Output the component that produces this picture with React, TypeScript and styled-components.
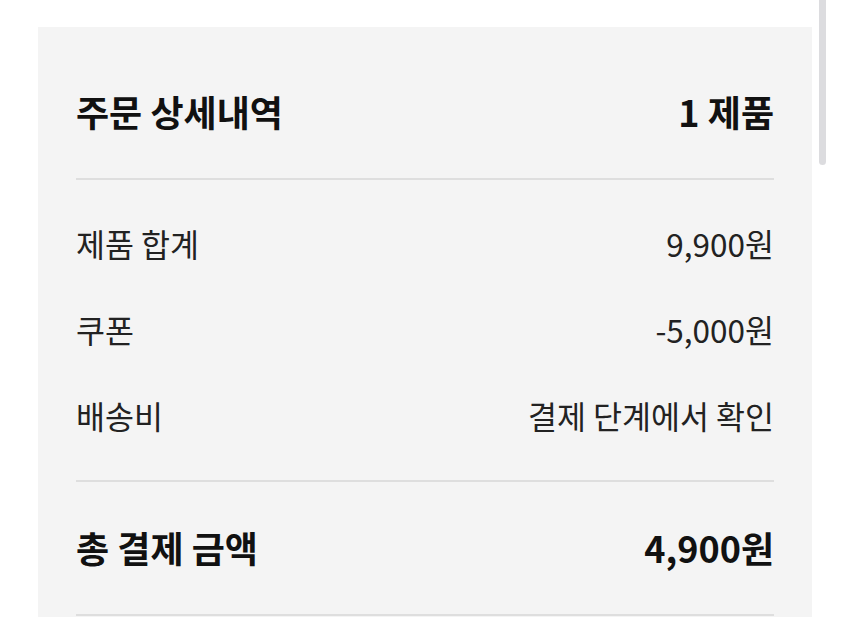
import React from 'react'
import styled, { createGlobalStyle } from 'styled-components'

const GlobalStyle = createGlobalStyle`
  html, body {
    margin: 0;
    padding: 0;
    background: #ffffff;
    overflow: hidden;
  }
  body {
    font-family: 'Noto Sans CJK KR', Roboto, sans-serif;
    color: #111111;
  }
`

const Page = styled.div`
  position: relative;
  width: 850px;
  height: 617px;
  overflow: hidden;
  padding-top: 27px;
  box-sizing: border-box;
`

const ScrollThumb = styled.div`
  position: absolute;
  top: 0;
  left: 819px;
  width: 7px;
  height: 165px;
  border-radius: 0 0 4px 4px;
  background: #dcdcdf;
`

const Panel = styled.section`
  margin-left: 38px;
  width: 774px;
  min-height: 620px;
  padding: 0 38px;
  box-sizing: border-box;
  background: #f4f4f4;
`

const Divider = styled.hr`
  margin: 0;
  border: none;
  height: 2px;
  background: #dedede;
`

const Header = styled.div`
  display: flex;
  justify-content: space-between;
  align-items: center;
  padding: 64px 0 47px;
`

const Title = styled.h2`
  margin: 0;
  font-size: 36px;
  line-height: 40px;
  font-weight: 700;
`

const Lines = styled.div`
  display: flex;
  flex-direction: column;
  gap: 46px;
  padding: 43px 0 45px;
`

const Line = styled.div`
  display: flex;
  justify-content: space-between;
  align-items: center;
  height: 40px;
`

const Text = styled.span<{ $bold?: boolean }>`
  font-size: ${(p) => (p.$bold ? '36px' : '31.5px')};
  line-height: 40px;
  font-weight: ${(p) => (p.$bold ? 700 : 400)};
  color: ${(p) => (p.$bold ? '#111111' : '#222222')};
`

const Total = styled(Line)`
  padding: 45px 0 47px;
`

const rows = [
  { label: '제품 합계', value: '9,900원' },
  { label: '쿠폰', value: '-5,000원' },
  { label: '배송비', value: '결제 단계에서 확인' },
]

export default function App() {
  return (
    <Page>
      <GlobalStyle />
      <Panel>
        <Header>
          <Title>주문 상세내역</Title>
          <Title>1 제품</Title>
        </Header>
        <Divider />
        <Lines>
          {rows.map((r) => (
            <Line key={r.label}>
              <Text>{r.label}</Text>
              <Text>{r.value}</Text>
            </Line>
          ))}
        </Lines>
        <Divider />
        <Total>
          <Text $bold>총 결제 금액</Text>
          <Text $bold>4,900원</Text>
        </Total>
        <Divider />
      </Panel>
      <ScrollThumb />
    </Page>
  )
}
